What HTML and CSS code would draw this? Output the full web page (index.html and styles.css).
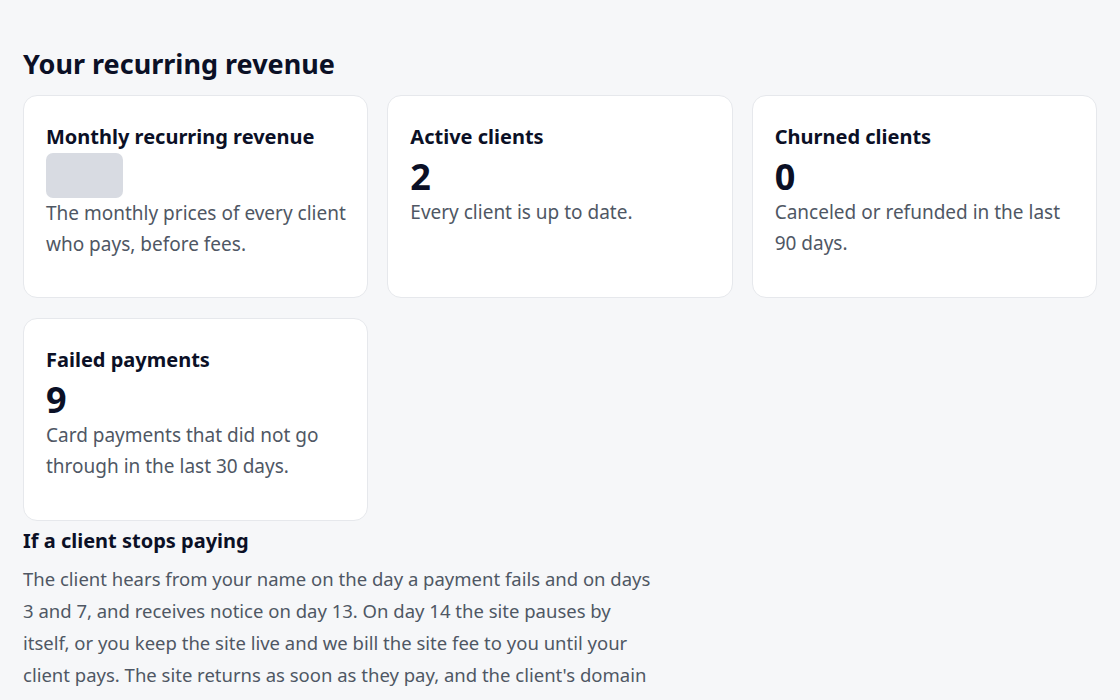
FILE: index.html
```html
<!DOCTYPE html>
<html lang="en">
<head>
<meta charset="utf-8">
<title>Your recurring revenue</title>
<link rel="stylesheet" href="styles.css">
</head>
<body>
<main class="page">
  <h1 class="page-title">Your recurring revenue</h1>
  <section class="stats">
    <div class="card">
      <h2 class="card-title">Monthly recurring revenue</h2>
      <div class="skeleton" aria-hidden="true"></div>
      <p class="card-desc">The monthly prices of every client who pays, before fees.</p>
    </div>
    <div class="card">
      <h2 class="card-title">Active clients</h2>
      <div class="card-value">2</div>
      <p class="card-desc">Every client is up to date.</p>
    </div>
    <div class="card">
      <h2 class="card-title">Churned clients</h2>
      <div class="card-value">0</div>
      <p class="card-desc">Canceled or refunded in the last 90 days.</p>
    </div>
    <div class="card">
      <h2 class="card-title">Failed payments</h2>
      <div class="card-value">9</div>
      <p class="card-desc">Card payments that did not go through in the last 30 days.</p>
    </div>
  </section>
  <section class="info">
    <h3 class="info-title">If a client stops paying</h3>
    <p class="info-text">The client hears from your name on the day a payment fails and on days 3 and 7, and receives notice on day 13. On day 14 the site pauses by itself, or you keep the site live and we bill the site fee to you until your client pays. The site returns as soon as they pay, and the client's domain stays connected the whole time.</p>
  </section>
</main>
</body>
</html>
```

FILE: styles.css
```css
* { box-sizing: border-box; }
html, body { margin: 0; padding: 0; }
body {
  background: #f6f7f9;
  font-family: "Noto Sans", "Open Sans", sans-serif;
  color: #0b1026;
}
.page {
  padding: 44px 23px 0 23px;
}
.page-title {
  margin: 0 0 11px 0;
  font-size: 27px;
  line-height: 40px;
  font-weight: 700;
  color: #0b1026;
}
.stats {
  display: grid;
  grid-template-columns: repeat(3, 1fr);
  column-gap: 19px;
  row-gap: 20px;
}
.card {
  background: #ffffff;
  border: 1px solid #e6e8ec;
  border-radius: 14px;
  padding: 24px 18px 36px 22px;
  min-height: 203px;
}
.card-title {
  margin: 0;
  font-size: 20px;
  line-height: 33px;
  font-weight: 700;
  color: #0b1026;
}
.skeleton {
  width: 77px;
  height: 45px;
  border-radius: 7px;
  background: #d8dbe2;
}
.card-value {
  padding-top: 4px;
  font-size: 36px;
  line-height: 40px;
  font-weight: 700;
  color: #0b1026;
}
.card-desc {
  margin: 0;
  font-size: 19px;
  line-height: 31px;
  color: #4f5764;
}
.info {
  margin-top: 6px;
  max-width: 632px;
}
.info-title {
  margin: 0 0 8px 0;
  font-size: 20px;
  line-height: 28px;
  font-weight: 700;
  color: #0b1026;
}
.info-text {
  margin: 0;
  font-size: 18.5px;
  line-height: 32px;
  color: #4f5764;
}
```
